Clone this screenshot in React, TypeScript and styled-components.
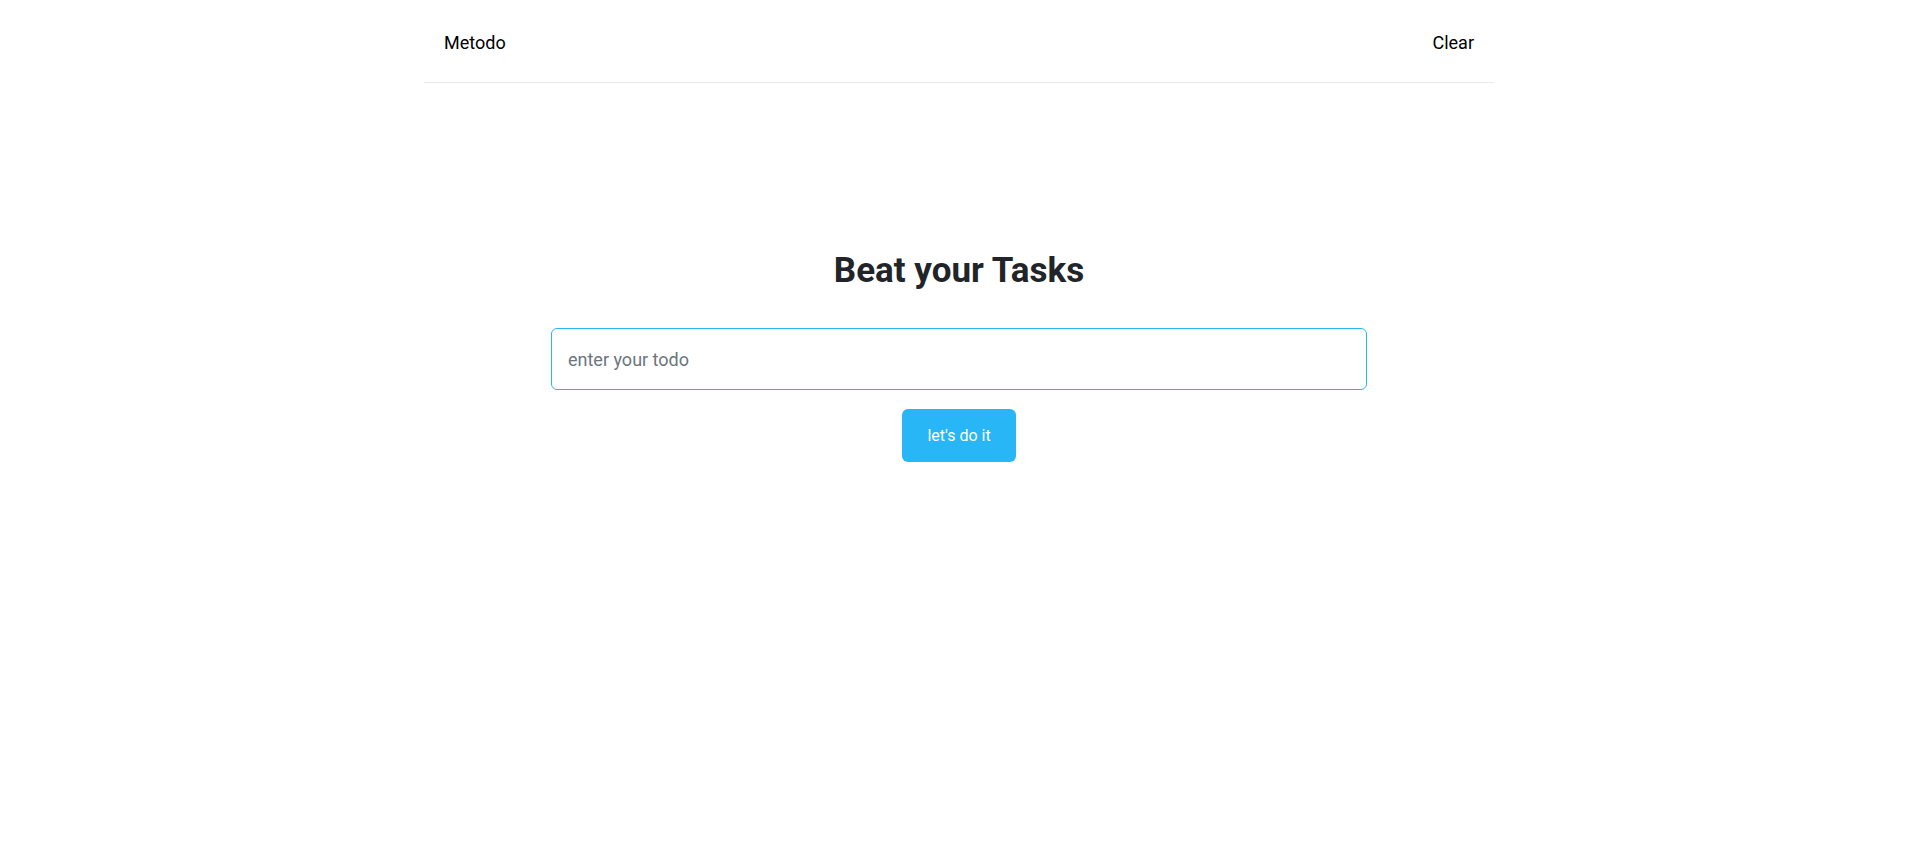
import React from "react";
import styled, { createGlobalStyle } from "styled-components";

const Global = createGlobalStyle`
  html, body { margin: 0; padding: 0; background: #ffffff; }
  body { font-family: Roboto, "Noto Sans", sans-serif; color: #212529; }
  * { box-sizing: border-box; }
`;

const Page = styled.div`
  width: 1070px;
  margin: 0 auto;
`;

const Header = styled.header`
  height: 83px;
  display: flex;
  align-items: center;
  justify-content: space-between;
  padding: 3px 20px 0;
  border-bottom: 1px solid #e9e9e9;
`;

const NavText = styled.span`
  font-size: 18px;
  color: #000000;
  cursor: pointer;
`;

const Main = styled.main`
  display: flex;
  flex-direction: column;
  align-items: center;
  padding-top: 167px;
`;

const Title = styled.h1`
  margin: 0 0 36px;
  font-size: 35px;
  line-height: 42px;
  font-weight: 700;
  color: #212529;
`;

const Input = styled.input`
  width: 816px;
  height: 62px;
  border: 1px solid #29b6f6;
  border-radius: 6px;
  padding: 0 16px;
  font-family: Roboto, sans-serif;
  font-size: 18px;
  color: #212529;
  caret-color: #000000;
  outline: none;
  &::placeholder { color: #6c757d; }
`;

const Button = styled.button`
  margin-top: 19px;
  width: 114px;
  height: 53px;
  border: none;
  border-radius: 6px;
  background: #29b6f6;
  color: #ffffff;
  font-family: Roboto, sans-serif;
  font-size: 16px;
  cursor: pointer;
`;

export default function App() {
  return (
    <>
      <Global />
      <Page>
        <Header>
          <NavText>Metodo</NavText>
          <NavText>Clear</NavText>
        </Header>
        <Main>
          <Title>Beat your Tasks</Title>
          <Input placeholder="enter your todo" autoFocus />
          <Button>let's do it</Button>
        </Main>
      </Page>
    </>
  );
}
